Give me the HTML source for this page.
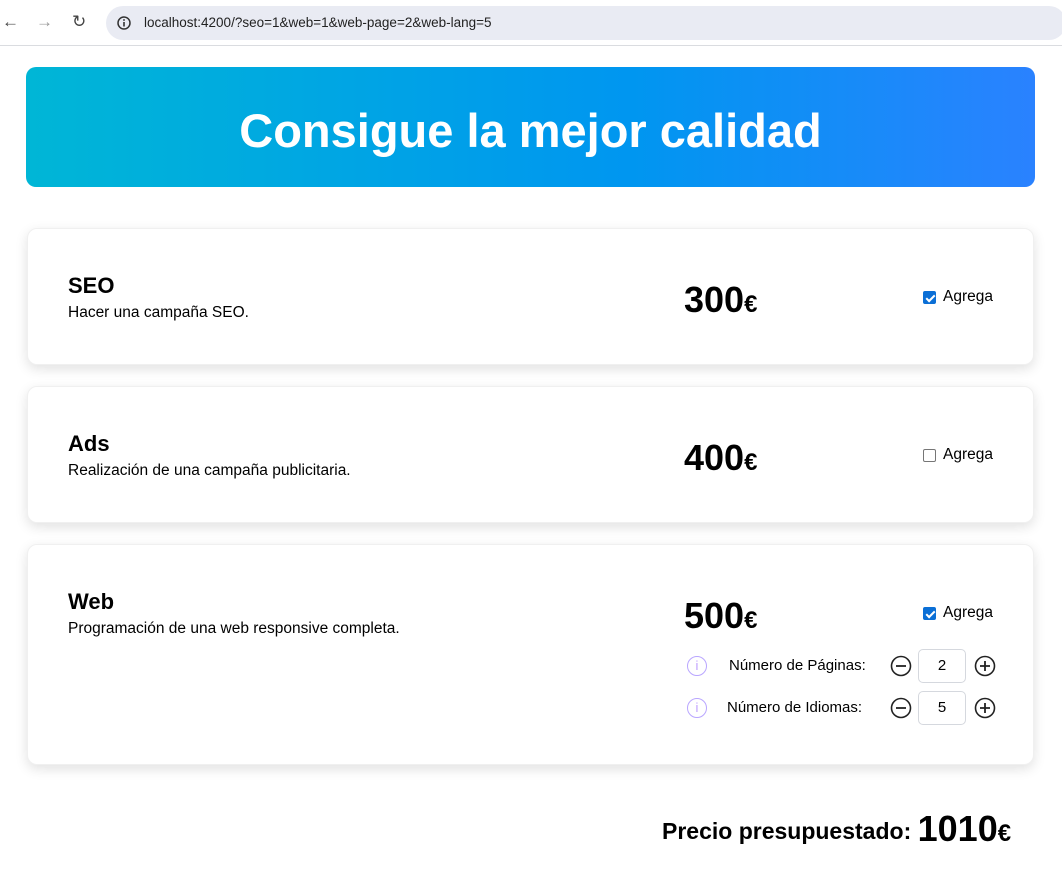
<!DOCTYPE html>
<html><head><style>
*{box-sizing:border-box;margin:0;padding:0}
body{width:1062px;height:883px;background:#fff;font-family:"Liberation Sans",sans-serif;position:relative;overflow:hidden;color:#000}
.bar{position:absolute;left:0;top:0;width:1062px;height:46px;background:#fff;border-bottom:1px solid #dadce0}
.url{position:absolute;left:106px;top:6px;width:960px;height:34px;background:#e9ebf3;border-radius:17px}
.url span{position:absolute;left:38px;top:9px;font-size:13.5px;color:#222}
.nav{position:absolute;top:12px;font-size:17px;color:#444}
.hero{position:absolute;left:26px;top:67px;width:1009px;height:120px;border-radius:10px;background:linear-gradient(90deg,#00b6d6,#0096f0 60%,#2a82ff);color:#fff;font-weight:bold;font-size:47px;text-align:center;line-height:128px}
.card{position:absolute;left:27px;width:1007px;background:#fff;border-radius:10px;box-shadow:0 4px 12px rgba(0,0,0,.12);border:1px solid #f0f0f0}
.t{position:absolute;left:40px;font-size:22px;font-weight:bold}
.d{position:absolute;left:40px;font-size:15.5px}
.p{position:absolute;left:656px;font-size:36px;font-weight:bold}
.p small{font-size:24px}
.cb{position:absolute;left:895px;width:13px;height:13px;border:1px solid #767676;border-radius:2px}
.cb.on{background:#0b6fd6;border-color:#0b6fd6}
.cb.on::after{content:"";position:absolute;left:3.5px;top:1px;width:3px;height:7px;border:solid #fff;border-width:0 2px 2px 0;transform:rotate(45deg)}
.ag{position:absolute;left:915px;font-size:15.5px}
.row{position:absolute;font-size:15px}
.circ{position:absolute}
.box{position:absolute;left:890px;width:48px;height:34px;border:1px solid #d5d8de;border-radius:5px;text-align:center;line-height:32px;font-size:15px}
.info{position:absolute;left:659px;width:20px;height:20px;border:1.6px solid #b9a6ff;border-radius:50%;color:#c0a0ff;font-size:13px;text-align:center;line-height:17px}
</style></head><body>
<div class="bar">
<div class="nav" style="left:2px">←</div><div class="nav" style="left:36px;color:#999">→</div><div class="nav" style="left:72px">↻</div>
<div class="url"><svg style="position:absolute;left:11px;top:10px" width="14" height="14"><circle cx="7" cy="7" r="6" fill="none" stroke="#333" stroke-width="1.5"/><rect x="6.2" y="6" width="1.6" height="4.5" fill="#333"/><rect x="6.2" y="3.2" width="1.6" height="1.6" fill="#333"/></svg><span>localhost:4200/?seo=1&amp;web=1&amp;web-page=2&amp;web-lang=5</span></div>
</div>
<div class="hero">Consigue la mejor calidad</div>

<div class="card" style="top:228px;height:137px">
<div class="t" style="top:44px">SEO</div><div class="d" style="top:75px">Hacer una campaña SEO.</div>
<div class="p" style="top:50px">300<small>€</small></div>
<div class="cb on" style="top:62px"></div><div class="ag" style="top:59px">Agrega</div>
</div>
<div class="card" style="top:386px;height:137px">
<div class="t" style="top:44px">Ads</div><div class="d" style="top:75px">Realización de una campaña publicitaria.</div>
<div class="p" style="top:50px">400<small>€</small></div>
<div class="cb" style="top:62px"></div><div class="ag" style="top:59px">Agrega</div>
</div>
<div class="card" style="top:544px;height:221px">
<div class="t" style="top:44px">Web</div><div class="d" style="top:75px">Programación de una web responsive completa.</div>
<div class="p" style="top:50px">500<small>€</small></div>
<div class="cb on" style="top:62px"></div><div class="ag" style="top:59px">Agrega</div>
<div class="info" style="top:111px">i</div><div class="row" style="left:701px;top:112px">Número de Páginas:</div>
<svg class="circ" style="left:862px;top:110px" width="22" height="22"><circle cx="11" cy="11" r="9.5" fill="none" stroke="#222" stroke-width="1.6"/><path d="M6 11h10" stroke="#222" stroke-width="1.8"/></svg>
<div class="box" style="top:104px">2</div>
<svg class="circ" style="left:946px;top:110px" width="22" height="22"><circle cx="11" cy="11" r="9.5" fill="none" stroke="#222" stroke-width="1.6"/><path d="M6 11h10M11 6v10" stroke="#222" stroke-width="1.8"/></svg>
<div class="info" style="top:153px">i</div><div class="row" style="left:699px;top:154px">Número de Idiomas:</div>
<svg class="circ" style="left:862px;top:152px" width="22" height="22"><circle cx="11" cy="11" r="9.5" fill="none" stroke="#222" stroke-width="1.6"/><path d="M6 11h10" stroke="#222" stroke-width="1.8"/></svg>
<div class="box" style="top:146px">5</div>
<svg class="circ" style="left:946px;top:152px" width="22" height="22"><circle cx="11" cy="11" r="9.5" fill="none" stroke="#222" stroke-width="1.6"/><path d="M6 11h10M11 6v10" stroke="#222" stroke-width="1.8"/></svg>
</div>
<div style="position:absolute;left:662px;top:808px;font-weight:bold;font-size:23px"><span style="position:relative;top:-2px">Precio presupuestado:</span> <span style="font-size:36px">1010</span><span style="font-size:24px">€</span></div>
</body></html>
